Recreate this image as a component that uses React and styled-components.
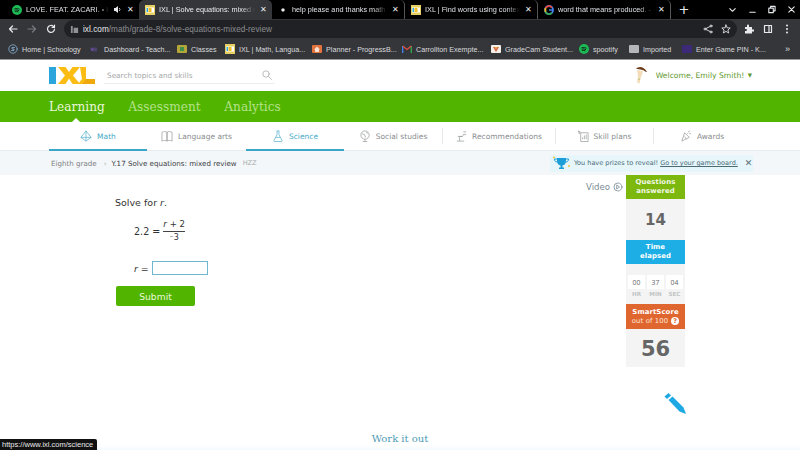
import React from 'react';
import styled, { createGlobalStyle } from 'styled-components';

const Global = createGlobalStyle`
  html, body { margin: 0; padding: 0; height: 450px; overflow: hidden; background: #fff; }
  * { box-sizing: border-box; }
  body { font-family: "DejaVu Sans", sans-serif; }
`;
const Page = styled.div`width: 800px; height: 450px; position: relative; overflow: hidden; display: flex; flex-direction: column;`;

const TabStrip = styled.div`height: 19px; background: #000; display: flex; padding-left: 6px; align-items: center; flex: none;`;
const Tab = styled.div`
  width: 133px; height: 19px; padding: 0 5px 0 6px; display: flex; align-items: center; gap: 4px;
  color: ${p => p.$active ? '#e8eaed' : '#dfe1e5'}; background: ${p => p.$active ? '#35363a' : 'transparent'};
  border-radius: 5px 5px 0 0; font: 7.3px "Liberation Sans", sans-serif; flex: none;
  border-right: ${p => p.$sep ? '1px solid #55565a' : '0'};
`;
const TabTitle = styled.span`flex: 1; white-space: nowrap; min-width: 0;
  -webkit-mask-image: linear-gradient(90deg, #000 86%, transparent); mask-image: linear-gradient(90deg, #000 86%, transparent);`;
const Close = styled.span`font-size: 8px; line-height: 1; color: #e8eaed; flex: none; width: 8px; text-align: center;`;
const WindowTools = styled.div`margin-left: 7px; flex: 1; display: flex; align-items: center; color: #e8eaed;`;
const Plus = styled.span`font-size: 13px; line-height: 1; width: 12px; margin-right: 33px; text-align: center;`;
const WinBtn = styled.span`width: 19.5px; display: flex; justify-content: center;`;

const Toolbar = styled.div`height: 20px; background: #35363a; display: flex; align-items: center; flex: none; padding-left: 8px;`;
const NavBtn = styled.span`width: 19px; display: flex; justify-content: flex-start; color: ${p => p.$dim ? '#77787c' : '#e8eaed'};`;
const Omni = styled.div`flex: 1; height: 18px; margin-left: -1px; margin-right: 7px; border-radius: 9px; background: #202124; display: flex; align-items: center; padding: 0 6px;`;
const Url = styled.span`font: 8.2px "Liberation Sans", sans-serif; color: #8c8e92; margin-left: 4px; letter-spacing: .04px; flex: 1;`;
const UrlHost = styled.span`color: #e8eaed;`;
const OmniTools = styled.div`display: flex; align-items: center; gap: 8px;`;
const ToolGroup = styled.div`display: flex; align-items: center; gap: 9px; margin-right: 11px;`;
const MenuDots = styled.svg`margin-left: 3px;`;

const Bookmarks = styled.div`height: 21px; background: #35363a; border-bottom: 1px solid #9a9a9a; display: flex; align-items: center; padding-left: 8px; color: #d9dbde; font: 7.2px "Liberation Sans", sans-serif; flex: none;`;
const Mark = styled.div`display: flex; align-items: center; gap: 4px; width: ${p => p.$w}px; flex: none; white-space: nowrap;`;
const Overflow = styled.span`margin-left: -1px; font-size: 9px;`;

const Header = styled.div`height: 31px; background: #fff; display: flex; align-items: center; padding-left: 49px; flex: none;`;
const Search = styled.div`width: 171px; height: 17px; margin-left: 9px; border-bottom: 1px solid #eceded; display: flex; align-items: center; justify-content: space-between; padding: 0 3px; color: #a5a8aa; font-size: 7.3px;`;
const Welcome = styled.div`margin-left: auto; margin-right: 48px; display: flex; align-items: center; gap: 8px; color: #5f9a2f; font-size: 7.65px;`;
const Caret = styled.span`font-size: 5.5px; margin-left: 1px; vertical-align: 1px;`;

const GreenBar = styled.div`height: 31px; background: #51b500; display: flex; align-items: center; padding-left: 49px; gap: 23.5px; flex: none; position: relative; font: 300 12.1px "DejaVu Serif", serif;`;
const GreenLink = styled.span`color: ${p => p.$active ? '#e9f6da' : '#b5e28a'}; position: relative; letter-spacing: .05px;
  ${p => p.$active && `&::after{content:"";position:absolute;left:22px;bottom:-9px;border:5px solid transparent;border-top:0;border-bottom-color:#fff;}`}`;

const SubNav = styled.div`height: 29px; background: #fff; display: grid; grid-template-columns: 98px 99px 98px 98px 113px 98px 98px; padding-left: 49px; flex: none; border-bottom: 1px solid #e9edf0;`;
const SubItem = styled.div`display: flex; align-items: center; justify-content: center; gap: 5px; height: 28.5px; padding-top: ${p => p.$on ? 2 : 0}px;
  font-size: 7.5px; color: ${p => p.$on ? '#45a9c7' : '#8a8d8f'}; border-bottom: ${p => p.$on ? '2px solid #3aa6c9' : '0'};
  position: relative;
  ${p => p.$sep && `&::before{content:"";position:absolute;left:0;top:6px;height:16px;width:1px;background:#e8e8e8;}`}`;

const Crumbs = styled.div`height: 24px; background: #f3f7fa; display: flex; align-items: center; padding-left: 51px; font-size: 7.1px; color: #7d8184; flex: none;`;
const Chevron = styled.span`color: #b0b3b5; margin: 0 5px 0 7px;`;
const Current = styled.span`color: #3c4043;`;
const Code = styled.span`color: #a8abad; margin-left: 6px; font-size: 6.6px;`;
const Prize = styled.div`margin-left: auto; margin-right: 47px; width: 203px; height: 17px; background: #e6f6fb; display: flex; align-items: center; padding-left: 2px; font-size: 6.5px; color: #4a6b78; gap: 2px; white-space: nowrap;`;
const Trophy = styled.svg`flex: none; margin-right: 1px;`;
const PrizeLink = styled.span`text-decoration: underline;`;
const PrizeX = styled.span`margin-left: 5px; font-size: 9px; color: #5a6a72;`;

const Main = styled.div`flex: 1; display: flex; position: relative; min-height: 0;`;
const Question = styled.div`width: 586px; padding: 22px 0 0 115px; font: 9.4px "DejaVu Sans", sans-serif; color: #333;`;
const Prompt = styled.div`font-size: 9.5px; line-height: 12px;`;
const Var = styled.i`font-style: italic;`;
const Equation = styled.div`margin: 10px 0 0 19px; display: flex; align-items: center; gap: 3px; font-size: 9.6px;`;
const Fraction = styled.div`display: flex; flex-direction: column; align-items: center; font-size: 8.6px;`;
const Numer = styled.span`border-bottom: 1px solid #444; padding: 0 0 1px; line-height: 11px;`;
const Denom = styled.span`line-height: 10px; padding-top: 1px; font-size: 8px;`;
const AnswerRow = styled.div`margin: 18px 0 0 19px; display: flex; align-items: center; gap: 3px; font-size: 9.4px;`;
const AnswerInput = styled.div`width: 56px; height: 14px; border: 1px solid #6fb6cf; background: #fff;`;
const Submit = styled.div`width: 79px; height: 20px; margin: 11px 0 0 1px; background: #51b500; border-radius: 2px; color: #e9f7da; font-size: 9.2px; display: flex; align-items: center; justify-content: center;`;

const VideoCol = styled.div`width: 40px; padding-top: 7px; color: #7b8c96; font-size: 8.6px; display: flex; align-items: flex-start; gap: 3px; height: 20px; white-space: nowrap;`;
const Side = styled.div`width: 59px; flex: none; text-align: center;`;
const SideHead = styled.div`height: ${p => p.$h || 24}px; background: ${p => p.$c}; color: ${p => p.$dim ? '#fff' : '#f2f9e6'}; font-size: 6.9px; font-weight: bold; line-height: 9px; display: flex; flex-direction: column; align-items: center; justify-content: center; letter-spacing: .1px;`;
const Sub = styled.span`font-weight: normal; color: #ffe6d8; display: flex; align-items: center; gap: 3px;`;
const Help = styled.span`width: 8px; height: 8px; border-radius: 50%; background: #fff; color: #e0662f; font-size: 6.5px; font-weight: bold; line-height: 8px; display: inline-block;`;
const Stat = styled.div`height: ${p => p.$h}px; background: #f4f4f4; color: #666; font-size: ${p => p.$fs}px; font-weight: bold; display: flex; align-items: center; justify-content: center; padding-top: ${p => p.$pt || 0}px;`;
const TimerBox = styled.div`height: 40px; background: #f4f4f4; padding: 0 2px; display: grid; grid-template-columns: repeat(3, 17px); gap: 0 2px; color: #666;`;
const Cell = styled.div`background: #fff; height: 14px; margin-top: 11px; display: flex; align-items: center; justify-content: center; font: 6.8px "Open Sans", sans-serif;`;
const CellLabel = styled.div`color: #c2c4c5; font-size: 5.6px; font-weight: bold; margin-top: 2px;`;

const Pencil = styled.svg`position: absolute; left: 663px; top: 216px;`;

const WorkOut = styled.div`position: absolute; left: 0; right: 0; top: 258px; height: 17px; text-align: center; font: 10px "DejaVu Serif", serif; color: #4f9bb5; background: linear-gradient(180deg, #fff 70%, #f3fbfe 100%);`;
const Status = styled.div`position: absolute; left: 0; bottom: 0; height: 11px; width: 97px; background: #111; color: #e8e8e8; font: 7.5px/11px "Liberation Sans", sans-serif; padding-left: 2px; border-radius: 0 2px 0 0;`;

const SpotifyIcon = () => <svg width="10" height="10" viewBox="0 0 10 10"><circle cx="5" cy="5" r="5" fill="#1db954"/><path d="M2.3 3.8c2-.5 3.700-.3 5.300.5M2.600 5.200c1.600-.4 3-.2 4.400.5M2.900 6.500c1.300-.3 2.400-.1 3.500.4" stroke="#111" strokeWidth=".8" fill="none"/></svg>;
const IxlFav = () => <svg width="10" height="10" viewBox="0 0 10 10"><rect width="10" height="10" fill="#e6cf63"/><rect x="1" y="2.500" width="8" height="5" fill="#fff"/><rect x="1.500" y="3" width="1.500" height="4" fill="#2ba6dc"/><path d="M3.500 3h3v4h-3z" fill="#f2bd1d"/></svg>;
const GoogleIcon = () => <svg width="10" height="10" viewBox="0 0 10 10"><circle cx="5" cy="5" r="4" fill="none" stroke="#4285f4" strokeWidth="1.800"/><path d="M1.600 3A4 4 0 0 1 8 2.500" stroke="#ea4335" strokeWidth="1.800" fill="none"/><path d="M1.400 7a4 4 0 0 0 6.400.8" stroke="#34a853" strokeWidth="1.800" fill="none"/><path d="M1.400 3.200v3.600" stroke="#fbbc05" strokeWidth="1.800"/><rect x="5" y="4.300" width="4" height="1.400" fill="#4285f4"/></svg>;
const Dot = () => <svg width="10" height="10" viewBox="0 0 10 10"><rect x="3.500" y="3.500" width="3" height="3" rx=".8" fill="#eee"/></svg>;
const Speaker = () => <svg width="9" height="9" viewBox="0 0 9 9" fill="#e8eaed"><path d="M1 3h1.500L5 1v7L2.500 6H1z"/><path d="M6.200 3a2 2 0 0 1 0 3" stroke="#e8eaed" strokeWidth=".8" fill="none"/></svg>;
const Stroke = ({ children, w = 10, c = 'currentColor', sw = 1.200 }) => <svg width={w} height={w} viewBox="0 0 10 10" fill="none" stroke={c} strokeWidth={sw} strokeLinecap="round" strokeLinejoin="round">{children}</svg>;
const Logo = () => <svg width="46" height="17" viewBox="0 0 46 17"><rect x="0" y="0" width="7" height="17" fill="#2ba6dc"/><path d="M9 0h7.500l3.500 5 3.500-5H31l-7 8.500 7 8.500h-7.500L20 11.500 16.500 17H9l7-8.500z" fill="#fbbd14"/><path d="M31 0h6v12h9v5H29l4-5z" fill="#fbbd14"/><path d="M37 12h9v5H33z" fill="#efa90c"/></svg>;
const Avatar = () => <svg width="14" height="19" viewBox="0 0 14 19"><path d="M2 3c2-3 8-3 11 3-2 0-3-2-5-2-2-1-4-1-6-1z" fill="#6e3f1c"/><path d="M3 4c2 0 4 .5 6 1.500L7 11l-1.500 6.500L3 16.500 4 10z" fill="#f3dcb8"/><path d="M4 13l2 .5" stroke="#b9c97a" strokeWidth="1"/></svg>;
const Line = ({ d, c }) => <svg width="12" height="12" viewBox="0 0 13 13" fill="none" stroke={c} strokeWidth=".8" strokeLinejoin="round">{d.map((x, i) => <path key={i} d={x} />)}</svg>;
const Square = ({ c, children }) => <svg width="10" height="10" viewBox="0 0 10 10"><rect y="1" width="10" height="8" rx="1" fill={c} />{children}</svg>;

const tabs = [
  { t: 'LOVE. FEAT. ZACARI. • Ke', i: <SpotifyIcon />, s: <Speaker /> },
  { t: 'IXL | Solve equations: mixed r', i: <IxlFav />, active: true },
  { t: 'help please and thanks math.', i: <Dot />, sep: true },
  { t: 'IXL | Find words using context', i: <IxlFav />, sep: true },
  { t: 'word that means produced. - ', i: <GoogleIcon />, sep: true },
];
const marks = [
  { t: 'Home | Schoology', w: 82, i: <Stroke c="#8ab4d8" sw={.8}><circle cx="5" cy="5" r="4.200" /><path d="M6.500 3.500h-2.500v1.500h2v1.500H3.500" /></Stroke> },
  { t: 'Dashboard - Teach...', w: 87, i: <Stroke c="#6a4fa3" sw={1}><path d="M1 4l1 3 1-3M4 7V4M6 4v3" /></Stroke> },
  { t: 'Classes', w: 48, i: <Square c="#b5a63a"><rect x="3" y="3" width="4" height="4" fill="#3f8f4f" /></Square> },
  { t: 'IXL | Math, Langua...', w: 87, i: <IxlFav /> },
  { t: 'Planner - ProgressB...', w: 90, i: <Square c="#e2733c"><path d="M5 2.500L8 5.500H7V8H3V5.500H2z" fill="#f7e2d3" /></Square> },
  { t: 'Carrollton Exempte...', w: 89, i: <svg width="10" height="8" viewBox="0 0 10 8"><path d="M.700 8V1" stroke="#4285f4" strokeWidth="1.300" /><path d="M9.300 8V1" stroke="#34a853" strokeWidth="1.300" /><path d="M.700 1L5 4.500 9.300 1" fill="none" stroke="#e4503f" strokeWidth="1.200" /></svg> },
  { t: 'GradeCam Student...', w: 88, i: <Square c="#f3f0e8"><path d="M2 3h6L5 8z" fill="#d8604f" /><path d="M3.500 3h3L5 5.500z" fill="#e4b838" /></Square> },
  { t: 'spootify', w: 50, i: <SpotifyIcon /> },
  { t: 'Imported', w: 53, i: <Square c="#b4b6ba" /> },
  { t: 'Enter Game PIN - K...', w: 104, i: <Square c="#3c2a78" /> },
];
const subs = [
  { t: 'Math', on: true, c: '#5ab3cf', d: ['M6.500 1L12 8l-5.500 4L1 8z', 'M6.500 1v11M1 8h11'] },
  { t: 'Language arts', c: '#9a9c9e', d: ['M1 2.500c2-1 4-1 5.500 0v9.500c-1.500-1-3.500-1-5.500 0z', 'M6.500 2.500c1.500-1 3.500-1 5.500 0v9.500c-2-1-4-1-5.500 0z'] },
  { t: 'Science', on: true, c: '#5ab3cf', d: ['M5 1h3M5.500 1v4L2 11.500q0 1 1 1h7q1 0 1-1L7.500 5V1', 'M4 8h5'] },
  { t: 'Social studies', c: '#9a9c9e', d: ['M6.500 1a4.500 4.500 0 1 1 0 9a4.500 4.500 0 0 1 0-9z', 'M6.500 10v2.500M4 12.500h5M3 4l3 1 1 3M8 2l1 2'] },
  { t: 'Recommendations', sep: true, c: '#9a9c9e', d: ['M2 12h8M5 12V7h3M3 7h5l2-3', 'M9 2h3M10 5h2'] },
  { t: 'Skill plans', sep: true, c: '#9a9c9e', d: ['M4 3h8v9.500H4z', 'M6 10V8M8 10V6M10 10V5', 'M1.500 1l2 1-1 2z'] },
  { t: 'Awards', sep: true, c: '#9a9c9e', d: ['M2 12l3-9 5 5z', 'M5 7l2 3M9 2l2-1M10 4h2M8 4l1-1'] },
];

export default function App() {
  return (
    <Page>
      <Global />
      <TabStrip>
        {tabs.map((x, i) => (
          <Tab key={i} $active={x.active} $sep={x.sep}>
            {x.i}<TabTitle>{x.t}</TabTitle>{x.s}<Close>✕</Close>
          </Tab>
        ))}
        <WindowTools>
          <Plus>+</Plus>
          <WinBtn><Stroke w={9}><path d="M2 4l3 3 3-3" /></Stroke></WinBtn>
          <WinBtn><Stroke w={9}><path d="M2 8h6" /></Stroke></WinBtn>
          <WinBtn><Stroke w={9}><path d="M2 3.500h5v5H2zM4 3.500V1.500h5v5H7" /></Stroke></WinBtn>
          <WinBtn><Stroke w={9}><path d="M2 2l6 6M8 2l-6 6" /></Stroke></WinBtn>
        </WindowTools>
      </TabStrip>
      <Toolbar>
        <NavBtn><Stroke><path d="M9 5H1.500M4.500 2L1.500 5l3 3" /></Stroke></NavBtn>
        <NavBtn $dim><Stroke><path d="M1 5h7.500M5.500 2l3 3-3 3" /></Stroke></NavBtn>
        <NavBtn><Stroke><path d="M8.500 5A3.500 3.500 0 1 1 7.500 2.500M8.500 1v2.500H6" /></Stroke></NavBtn>
        <Omni>
          <svg width="9" height="9" viewBox="0 0 10 10" fill="#8f9195"><path d="M1 1h2v8H1zM4 3h5v6H4z" /></svg>
          <Url><UrlHost>ixl.com</UrlHost>/math/grade-8/solve-equations-mixed-review</Url>
          <OmniTools>
            <Stroke c="#dfe1e5" sw={.9}><circle cx="8" cy="2" r="1" /><circle cx="2" cy="5" r="1" /><circle cx="8" cy="8" r="1" /><path d="M3 4.500l4-2M3 5.500l4 2" /></Stroke>
            <Stroke c="#dfe1e5" sw={.9}><path d="M5 1l1.200 2.800 3 .2-2.300 2 .8 3L5 7.400 2.300 9l.8-3L.8 4l3-.2z" /></Stroke>
          </OmniTools>
        </Omni>
        <ToolGroup>
          <svg width="10" height="10" viewBox="0 0 10 10" fill="#e8eaed"><path d="M1 3h2V1.500a1 1 0 0 1 2 0V3h3v2.500H9.500a1 1 0 0 1 0 2H8V9.500H1V7h1a1 1 0 0 0 0-2H1z" /></svg>
          <Stroke c="#e8eaed"><path d="M1.500 1.500h7v7h-7z" /><path d="M6 2v6" /></Stroke>
          <MenuDots width="4" height="10" viewBox="0 0 4 10" fill="#e8eaed"><circle cx="2" cy="1.500" r="1" /><circle cx="2" cy="5" r="1" /><circle cx="2" cy="8.500" r="1" /></MenuDots>
        </ToolGroup>
      </Toolbar>
      <Bookmarks>
        {marks.map((m, i) => <Mark key={i} $w={m.w}>{m.i}<span>{m.t}</span></Mark>)}
        <Overflow>»</Overflow>
      </Bookmarks>
      <Header>
        <Logo />
        <Search>Search topics and skills<Stroke c="#a9acae" sw={.8}><circle cx="4" cy="4" r="3.200" /><path d="M6.500 6.500L9.500 9.500" /></Stroke></Search>
        <Welcome>
          <Avatar />
          <span>Welcome, Emily Smith! <Caret>▼</Caret></span>
        </Welcome>
      </Header>
      <GreenBar>
        <GreenLink $active>Learning</GreenLink>
        <GreenLink>Assessment</GreenLink>
        <GreenLink>Analytics</GreenLink>
      </GreenBar>
      <SubNav>
        {subs.map((s, i) => (
          <SubItem key={i} $on={s.on} $sep={s.sep}>
            <Line d={s.d} c={s.c} />{s.t}
          </SubItem>
        ))}
      </SubNav>
      <Crumbs>
        Eighth grade<Chevron>›</Chevron><Current>Y.17 Solve equations: mixed review</Current><Code>HZZ</Code>
        <Prize>
          <Trophy width="19" height="14" viewBox="0 0 19 14"><path d="M5 2h9v3c0 3-2 4.500-4.500 4.500S5 8 5 5z" fill="#1c9fd8" /><path d="M8.500 9h2v2.500H12V13H7v-1.500h1.500z" fill="#1c9fd8" /><path d="M5 3H2.500c0 2 1 3 3 3M14 3h2.500c0 2-1 3-3 3" fill="none" stroke="#1c9fd8" /><circle cx="2" cy="1.500" r="1" fill="#e8c63a" /><circle cx="17" cy="10" r="1" fill="#e8c63a" /></Trophy>
          You have prizes to reveal! <PrizeLink>Go to your game board.</PrizeLink><PrizeX>✕</PrizeX>
        </Prize>
      </Crumbs>
      <Main>
        <Question>
          <Prompt>Solve for <Var>r</Var>.</Prompt>
          <Equation>
            2.2 =
            <Fraction>
              <Numer><Var>r</Var> + 2</Numer>
              <Denom>⁻3</Denom>
            </Fraction>
          </Equation>
          <AnswerRow><Var>r</Var> = <AnswerInput /></AnswerRow>
          <Submit>Submit</Submit>
        </Question>
        <VideoCol>
          Video
          <Stroke c="#7b8c96" sw={.8}><circle cx="5" cy="5" r="4" /><path d="M4 3.200L6.500 5 4 6.800z" /></Stroke>
        </VideoCol>
        <Side>
          <SideHead $c="#7cb80e">Questions<span>answered</span></SideHead>
          <Stat $h={41} $fs={15} $pt={1}>14</Stat>
          <SideHead $c="#1eaee6" $dim>Time<span>elapsed</span></SideHead>
          <TimerBox>
            <div><Cell>00</Cell><CellLabel>HR</CellLabel></div>
            <div><Cell>37</Cell><CellLabel>MIN</CellLabel></div>
            <div><Cell>04</Cell><CellLabel>SEC</CellLabel></div>
          </TimerBox>
          <SideHead $c="#e0662f" $dim $h={25}>SmartScore<Sub>out of 100 <Help>?</Help></Sub></SideHead>
          <Stat $h={38} $fs={21} $pt={2}>56</Stat>
        </Side>
        <Pencil width="24" height="24" viewBox="0 0 24 24">
          <path d="M1.500 5.500L5.500 2l2.500 2.500-4 3.500z" fill="#1fa9e4" />
          <path d="M5.500 9l4-3.500L20.500 16.500 23 23l-6.500-2.500z" fill="#1fa9e4" />
        </Pencil>
        <WorkOut>Work it out</WorkOut>
        <Status>https://www.ixl.com/science</Status>
      </Main>
    </Page>
  );
}
